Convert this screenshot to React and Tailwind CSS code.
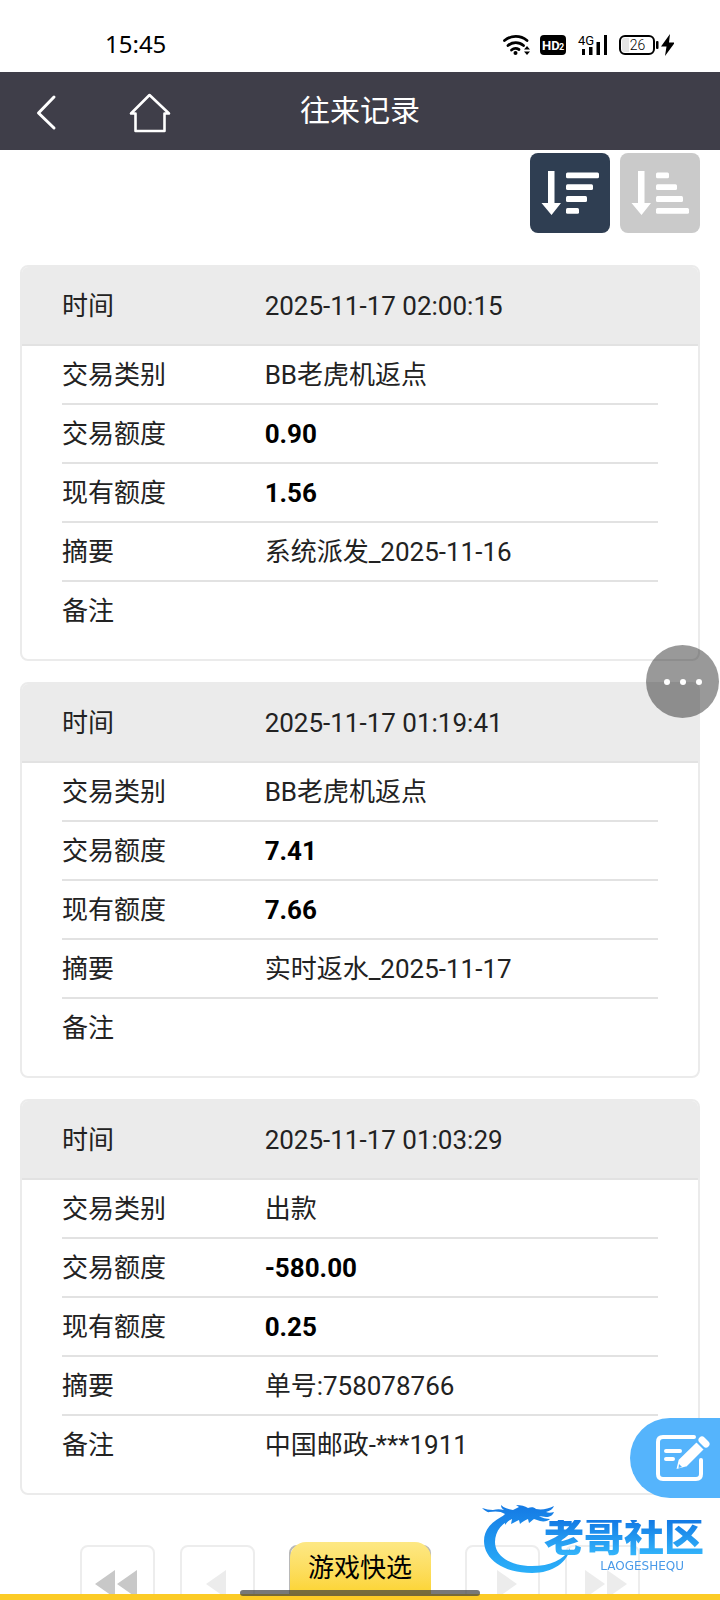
import clsx from "clsx";

const records = [
    {
        time: "2025-11-17 02:00:15",
        type: "BB老虎机返点",
        amount: "0.90",
        balance: "1.56",
        summary: "系统派发_2025-11-16",
        remark: "",
    },
    {
        time: "2025-11-17 01:19:41",
        type: "BB老虎机返点",
        amount: "7.41",
        balance: "7.66",
        summary: "实时返水_2025-11-17",
        remark: "",
    },
    {
        time: "2025-11-17 01:03:29",
        type: "出款",
        amount: "-580.00",
        balance: "0.25",
        summary: "单号:758078766",
        remark: "中国邮政-***1911",
    },
];

const StatusBar = () => (
    <div className="flex h-18 shrink-0 items-end justify-between bg-white pr-[46px] pb-3 pl-[105px] text-black">
        <span className="font-['Noto_Sans',sans-serif] text-2xl leading-8">15:45</span>
        <svg width="172" height="32" viewBox="0 0 172 32" className="shrink-0" aria-hidden="true">
            {/* wifi */}
            <g fill="none" stroke="#000" strokeWidth="2.8" strokeLinecap="round">
                <path d="M2.500 12.500a17.500 17.500 0 0 1 22.500 0" />
                <path d="M6 17.500a12 12 0 0 1 15.500 0" />
                <path d="M9.500 22a6.500 6.500 0 0 1 7.500-.5" />
            </g>
            <circle cx="13.500" cy="25" r="2" />
            <path d="M22 21.500l3-3.500 3 3.500zM22 23.500l3 3.500 3-3.500z" />
            {/* HD badge */}
            <rect x="38" y="7" width="26" height="20" rx="4" />
            <text x="40" y="22" fontSize="13" fontWeight="700" fill="#fff" fontFamily="Roboto">HD</text>
            <text x="57" y="22" fontSize="9" fontWeight="700" fill="#fff" fontFamily="Roboto">2</text>
            {/* signal */}
            <text x="76" y="17" fontSize="13" fontFamily="Roboto">4G</text>
            <path d="M80 21h3v6h-3zM87 19h3.500v8h-3.500zM94.500 14h3.500v13h-3.500zM102 7h3v20h-3z" />
            {/* battery */}
            <rect x="118" y="8" width="34" height="18" rx="5" fill="#fff" stroke="#000" strokeWidth="2" />
            <path d="M122 10h5v14h-5q-2 0-2-2v-10q0-2 2-2z" fill="#e5e5e5" />
            <text x="135.500" y="22" fontSize="14" fontWeight="300" textAnchor="middle" fontFamily="Roboto">26</text>
            <rect x="154" y="13" width="2.500" height="8" rx="1" />
            <path d="M168 6l-9 12.500h5.500L163 28l10-13.500h-6z" />
        </svg>
    </div>
);

const Header = () => (
    <header className="relative flex h-[78px] shrink-0 items-center bg-[#3f3e49] text-white">
        <button type="button" aria-label="返回" className="flex h-full w-24 items-center pl-8">
            <svg width="28" height="40" viewBox="0 0 28 40" fill="none" stroke="currentColor" strokeWidth="3" strokeLinecap="round" strokeLinejoin="round">
                <path d="M22 6L6.500 22 22 37" />
            </svg>
        </button>
        <a href="#home" aria-label="首页" className="flex h-full items-center pl-8">
            <svg width="44" height="44" viewBox="0 0 44 44" fill="none" stroke="currentColor" strokeWidth="2.600" strokeLinejoin="round">
                <path d="M21.500 6L3 24.500h4.500v17.500h29V24.500H41z" />
            </svg>
        </a>
        <h1 className="pointer-events-none absolute inset-x-0 text-center text-3xl leading-10">往来记录</h1>
    </header>
);

const SortButton = ({ label, active, bars }) => (
    <button
        type="button"
        aria-label={label}
        aria-pressed={active}
        className={clsx("size-20 rounded-lg text-white", active ? "bg-[#2f3e52]" : "bg-[#cacaca]")}
    >
        <svg width="80" height="80" viewBox="0 0 80 80" fill="currentColor">
            <path d="M18 18h6.500v32H31L21.500 62 11.500 50H18z" />
            {bars.map((width, i) => (
                <rect key={i} x="36" y={19.5 + i * 11.8} width={width} height="5.8" rx="1.500" />
            ))}
        </svg>
    </button>
);

const Row = ({ label, value, bold }) => (
    <div className="grid h-[59px] grid-cols-[34%_1fr] items-center border-b-2 border-[#e2e2e2] last:border-transparent">
        <dt>{label}</dt>
        <dd className={clsx(bold && "font-bold text-black")}>{value}</dd>
    </div>
);

const RecordCard = ({ record }) => (
    <dl className="overflow-hidden rounded-lg border-2 border-[#ebebeb] bg-white pb-[18px]">
        <div className="border-b-2 border-[#e2e2e2] bg-[#ebebeb] px-10">
            <div className="grid h-[77px] grid-cols-[34%_1fr] items-center">
                <dt>时间</dt>
                <dd>{record.time}</dd>
            </div>
        </div>
        <div className="px-10">
            <Row label="交易类别" value={record.type} />
            <Row label="交易额度" value={record.amount} bold />
            <Row label="现有额度" value={record.balance} bold />
            <Row label="摘要" value={record.summary} />
            <Row label="备注" value={record.remark} />
        </div>
    </dl>
);

const PageButton = ({ label, path, color }) => (
    <button type="button" aria-label={label} className="h-18 w-[75px] rounded-lg border-2 border-[#ededed]">
        <svg width="71" height="68" viewBox="0 0 71 68" className={color} fill="currentColor">
            <path d={path} />
        </svg>
    </button>
);

const Pagination = () => (
    <nav aria-label="分页" className="flex justify-center gap-[34px] pt-[50px] pb-20">
        <div className="flex gap-[25px]">
            <PageButton label="第一页" color="text-[#c8c8c8]" path="M13 37l20-14v28zM35 37l20-14v28z" />
            <PageButton label="上一页" color="text-[#ececec]" path="M24 37l20-14v28z" />
        </div>
        <select aria-label="页码" className="h-18 w-[142px] appearance-none rounded-lg border-2 border-[#b8b8b8] text-center">
            <option>1</option>
        </select>
        <div className="flex gap-[25px]">
            <PageButton label="下一页" color="text-[#ececec]" path="M50 37L30 23v28z" />
            <PageButton label="最后一页" color="text-[#ececec]" path="M38 37L18 23v28zM60 37L40 23v28z" />
        </div>
    </nav>
);

const Watermark = () => (
    <div className="pointer-events-none fixed right-4 bottom-6 flex" aria-hidden="true">
        <svg width="92" height="72" viewBox="0 0 92 72" className="-mr-[30px]">
            <defs>
                <linearGradient id="dragon" gradientUnits="userSpaceOnUse" x1="0" y1="0" x2="0" y2="72">
                    <stop offset="0" stopColor="#1479e4" />
                    <stop offset="1" stopColor="#2cb2fa" />
                </linearGradient>
            </defs>
            <g fill="url(#dragon)">
                <path d="M25 10C9 17 2 26 2 37c0 18 19 32 48 32 21 0 36-11 38-25-6 12-20 18-38 18-22 0-37-10-37-24 0-11 7-20 21-25z" />
                <path d="M0 4c4 1 7 2 11 2 4-1 7-1 11 0-2-1-3-3-3-5 3 3 7 4 12 5l6-3-3-2c5 0 9 1 12 3 3-1 6-1 8 1 6 1 12 0 18-3-1 3-4 5-8 6 2 1 5 1 8 0-1 3-4 5-8 5l-7-1c3 2 7 3 11 3-2 2-6 3-10 2l-6-2c-2 1-3 3-5 4l-1-4c-3 1-6 3-8 5l-1-4c-3 1-5 3-8 4l1-5c-3 1-5 3-7 6 0-2 0-5 1-7l-6 3c1-3 3-5 5-7-4-3-10-3-16-2C7 9 3 7 0 4z" />
            </g>
        </svg>
        <div className="flex flex-col items-end pt-4">
            <span className="bg-linear-to-b from-[#1479e4] to-[#35b6fb] bg-clip-text text-[40px] leading-9 font-black text-transparent">老哥社区</span>
            <span className="pt-1 pr-5 font-['DejaVu_Sans',sans-serif] text-xs leading-3 text-[#4a9ae8]">LAOGESHEQU</span>
        </div>
    </div>
);

const FloatingButtons = () => (
    <>
        <button type="button" aria-label="更多" className="fixed top-[645px] right-px flex size-[73px] items-center justify-center gap-[10px] rounded-full bg-black/40">
            <span className="size-[6px] rounded-full bg-white" />
            <span className="size-[6px] rounded-full bg-white" />
            <span className="size-[6px] rounded-full bg-white" />
        </button>
        <button type="button" aria-label="反馈" className="fixed right-0 bottom-[102px] h-20 w-[90px] rounded-l-full bg-[#55b4fc]">
            <svg width="90" height="80" viewBox="0 0 90 80" fill="none" stroke="#fff" strokeLinecap="round">
                <path d="M64 19H33q-5 0-5 5v32q0 5 5 5h33q5 0 5-5V42" strokeWidth="4" />
                <path d="M36 33h14M36 41h7" strokeWidth="4" />
                <path d="M66.500 23.500l8 8L57 49l-11.500 3L48 41.500z" fill="#fff" stroke="#55b4fc" strokeWidth="1.500" strokeLinejoin="round" />
                <path d="M49 46l3 3-3.500 1z" fill="#55b4fc" stroke="none" />
                <path d="M72 22l4 4" strokeWidth="7" />
            </svg>
        </button>
    </>
);

const QuickPick = () => (
    <>
        <div className="fixed inset-x-0 bottom-0 flex flex-col items-center">
            <button type="button" className="h-[52px] w-[141px] rounded-t-2xl bg-linear-to-b from-[#fde884] to-[#fcd42e] text-[26px] leading-[52px] text-black">
                游戏快选
            </button>
            <div className="h-[6px] w-full bg-[#fccb26]" />
        </div>
        <div className="fixed bottom-1 left-1/2 h-[6px] w-60 -translate-x-1/2 rounded-full bg-[#3f3f3f]/70" />
    </>
);

const App = () => {
    return (
        <div className="flex h-screen flex-col overflow-hidden bg-white font-[Roboto,'Noto_Sans_CJK_SC',sans-serif] text-[26px] leading-8 text-[#222]">
            <StatusBar />
            <Header />
            <main className="min-h-0 flex-1 overflow-y-auto px-5 [scrollbar-width:none]">
                <div className="flex justify-end gap-[10px] pt-[3px] pb-8">
                    <SortButton label="降序" active bars={[33, 27, 21, 13]} />
                    <SortButton label="升序" active={false} bars={[13, 21, 27, 33]} />
                </div>
                <div className="flex flex-col gap-[21px]">
                    {records.map((record) => (
                        <RecordCard key={record.time} record={record} />
                    ))}
                </div>
                <Pagination />
            </main>
            <FloatingButtons />
            <QuickPick />
            <Watermark />
        </div>
    );
};

export default App;
